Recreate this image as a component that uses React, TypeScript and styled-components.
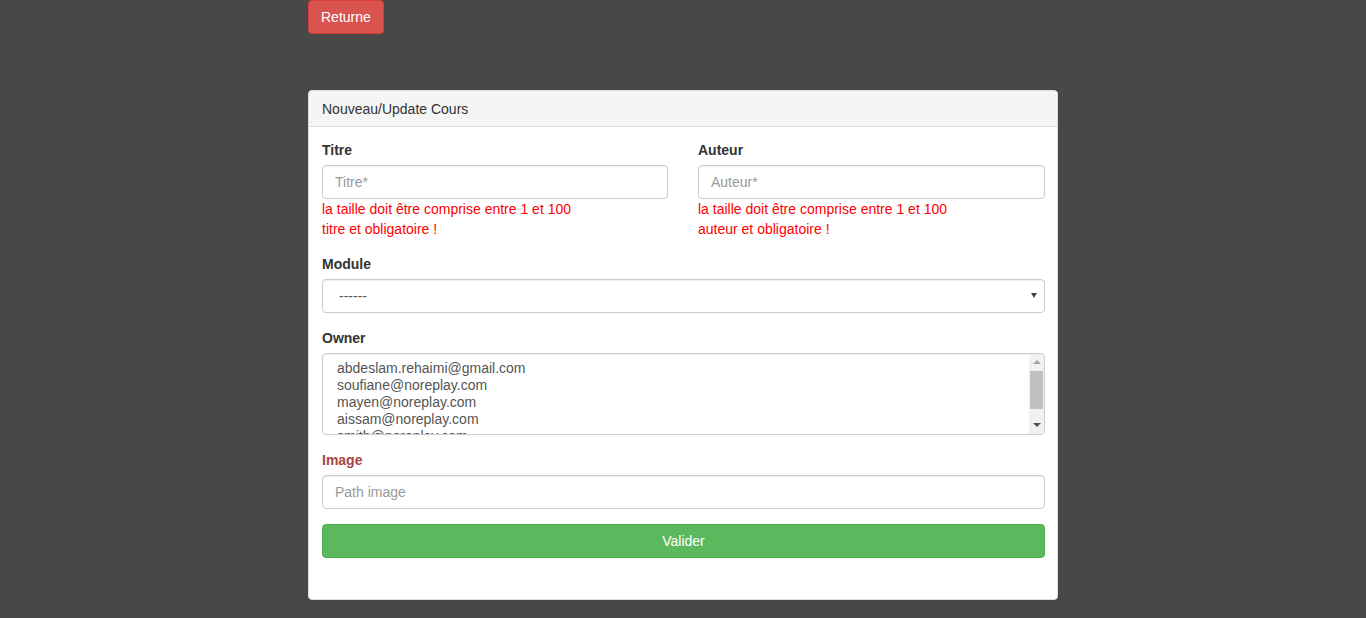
import React from "react";
import styled, { createGlobalStyle } from "styled-components";

const Global = createGlobalStyle`
  html, body { margin: 0; padding: 0; background: #4a4846; }
  body { font-family: "Liberation Sans", Arial, sans-serif; font-size: 14px; line-height: 1.42857; color: #333; }
  * { box-sizing: border-box; }
`;

const Page = styled.div`
  width: 750px;
  margin: 0 auto;
  min-height: 618px;
`;

const Btn = styled.button<{ $variant: "danger" | "success"; $block?: boolean }>`
  display: ${(p) => (p.$block ? "block" : "inline-block")};
  width: ${(p) => (p.$block ? "100%" : "auto")};
  height: 34px;
  padding: 6px 12px;
  font-family: "Liberation Sans", Arial, sans-serif;
  font-size: 14px;
  line-height: 20px;
  color: #fff;
  border-radius: 4px;
  cursor: pointer;
  background: ${(p) => (p.$variant === "danger" ? "#d9534f" : "#5cb85c")};
  border: 1px solid ${(p) => (p.$variant === "danger" ? "#d43f3a" : "#4cae4c")};
`;

const Panel = styled.div`
  margin-top: 56px;
  background: #fff;
  border: 1px solid #ddd;
  border-radius: 4px;
`;

const PanelHeading = styled.div`
  height: 36px;
  padding: 9px 13px 7px;
  background: #f5f5f5;
  border-bottom: 1px solid #ddd;
  border-radius: 3px 3px 0 0;
  color: #333;
`;

const PanelBody = styled.form`
  padding: 13px 12px 41px 13px;
`;

const Row = styled.div`
  display: grid;
  grid-template-columns: 346px 347px;
  column-gap: 30px;
`;

const Group = styled.div`
  margin-bottom: 15px;
`;

const Label = styled.label<{ $error?: boolean }>`
  display: block;
  font-weight: bold;
  padding-top: 1px;
  margin-bottom: 4px;
  color: ${(p) => (p.$error ? "#a94442" : "#333")};
`;

const controlBase = `
  display: block;
  width: 100%;
  font-family: "Liberation Sans", Arial, sans-serif;
  font-size: 14px;
  color: #555;
  background: #fff;
  border: 1px solid #ccc;
  border-radius: 4px;
  box-shadow: inset 0 1px 1px rgba(0, 0, 0, 0.075);
  outline: none;
`;

const Input = styled.input`
  ${controlBase}
  height: 34px;
  padding: 6px 12px;
  &::placeholder { color: #999; }
`;

const SelectWrap = styled.div`
  position: relative;
  &::after {
    content: "";
    position: absolute;
    right: 8px;
    top: 14px;
    border-left: 3px solid transparent;
    border-right: 3px solid transparent;
    border-top: 5px solid #444;
    pointer-events: none;
  }
`;

const Select = styled.select`
  ${controlBase}
  height: 34px;
  padding: 6px 24px 6px 16px;
  appearance: none;
  -webkit-appearance: none;
`;

const ListBox = styled.div`
  ${controlBase}
  height: 82px;
  display: flex;
  overflow: hidden;
`;

const ListItems = styled.ul`
  flex: 1;
  margin: 0;
  padding: 6px 12px;
  list-style: none;
  overflow: hidden;
`;

const ListItem = styled.li`
  padding: 0 2px;
  height: 17px;
  line-height: 17px;
  white-space: nowrap;
`;

const ScrollBar = styled.div`
  width: 15px;
  flex: none;
  background: #f1f1f1;
  display: flex;
  flex-direction: column;
  align-items: center;
  padding: 0 1px;
`;

const ScrollArrow = styled.div<{ $dir: "up" | "down"; $active?: boolean }>`
  height: 17px;
  width: 100%;
  display: flex;
  align-items: center;
  justify-content: center;
  &::before {
    content: "";
    border-left: 4px solid transparent;
    border-right: 4px solid transparent;
    ${(p) =>
      p.$dir === "up"
        ? `border-bottom: 4px solid ${p.$active ? "#505050" : "#a3a3a3"};`
        : `border-top: 4px solid ${p.$active ? "#505050" : "#a3a3a3"};`}
  }
`;

const ScrollTrack = styled.div`
  flex: 1;
  width: 100%;
`;

const ScrollThumb = styled.div`
  height: 38px;
  width: 100%;
  background: #c1c1c1;
`;

const ErrorText = styled.div`
  color: #f00;
  line-height: 20px;
`;

const owners = [
  "abdeslam.rehaimi@gmail.com",
  "soufiane@noreplay.com",
  "mayen@noreplay.com",
  "aissam@noreplay.com",
  "smith@noreplay.com",
];

export default function App() {
  return (
    <>
      <Global />
      <Page>
        <Btn $variant="danger" type="button">Returne</Btn>
        <Panel>
          <PanelHeading>Nouveau/Update Cours</PanelHeading>
          <PanelBody onSubmit={(e) => e.preventDefault()}>
            <Row>
              <Group>
                <Label>Titre</Label>
                <Input placeholder="Titre*" />
                <ErrorText>la taille doit être comprise entre 1 et 100</ErrorText>
                <ErrorText>titre et obligatoire !</ErrorText>
              </Group>
              <Group>
                <Label>Auteur</Label>
                <Input placeholder="Auteur*" />
                <ErrorText>la taille doit être comprise entre 1 et 100</ErrorText>
                <ErrorText>auteur et obligatoire !</ErrorText>
              </Group>
            </Row>
            <Group>
              <Label>Module</Label>
              <SelectWrap>
                <Select defaultValue="">
                  <option value="">------</option>
                </Select>
              </SelectWrap>
            </Group>
            <Group>
              <Label>Owner</Label>
              <ListBox role="listbox" aria-multiselectable="true">
                <ListItems>
                  {owners.map((o) => (
                    <ListItem key={o} role="option" aria-selected="false">{o}</ListItem>
                  ))}
                </ListItems>
                <ScrollBar aria-hidden="true">
                  <ScrollArrow $dir="up" />
                  <ScrollTrack>
                    <ScrollThumb />
                  </ScrollTrack>
                  <ScrollArrow $dir="down" $active />
                </ScrollBar>
              </ListBox>
            </Group>
            <Group>
              <Label $error>Image</Label>
              <Input placeholder="Path image" />
            </Group>
            <Btn $variant="success" $block type="submit">Valider</Btn>
          </PanelBody>
        </Panel>
      </Page>
    </>
  );
}
